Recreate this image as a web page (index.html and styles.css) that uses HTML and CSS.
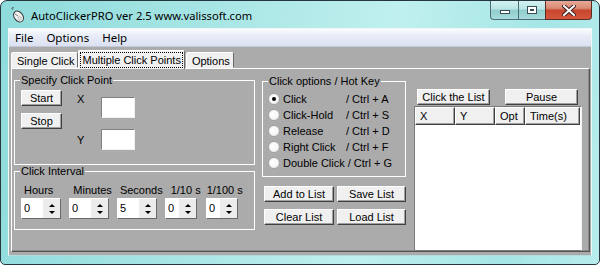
FILE: index.html
```html
<!DOCTYPE html>
<html lang="en">
<head>
  <meta charset="UTF-8"/>
  <title>AutoClickerPRO ver 2.5</title>
  <link rel="stylesheet" href="styles.css">
</head>
<body>

  <div class="window">
    <!-- Title bar -->
    <div class="titlebar">
      <svg class="app-icon" width="15" height="16" viewBox="0 0 15 16">
        <path d="M3 3 C1 1 2 0 4 1" fill="none" stroke="#555" stroke-width="1"/>
        <ellipse cx="8.5" cy="9.5" rx="4.3" ry="6" transform="rotate(-38 8.5 9.5)" fill="#f4f4f4" stroke="#3a3a3a" stroke-width="1"/>
        <path d="M4.5 6.5 L8 9" stroke="#777" stroke-width="1"/>
        <ellipse cx="10" cy="11.5" rx="2.5" ry="3" transform="rotate(-38 10 11.5)" fill="#d8d8d8"/>
      </svg>
      <span class="title">AutoClickerPRO ver 2.5 www.valissoft.com</span>
      <div class="caption-btns">
        <span class="cap cap-min"><i></i></span>
        <span class="cap cap-max"><i></i></span>
        <span class="cap cap-close">
          <svg width="14" height="11" viewBox="0 0 14 11">
            <path d="M2 1 L12 10 M12 1 L2 10" stroke="#3d2020" stroke-width="4" stroke-linecap="square"/>
            <path d="M2 1 L12 10 M12 1 L2 10" stroke="#fff" stroke-width="2" stroke-linecap="square"/>
          </svg>
        </span>
      </div>
    </div>

    <div class="client">
      <div class="menubar">
        <span>File</span>
        <span>Options</span>
        <span>Help</span>
      </div>

      <div class="workarea">
        <div class="tabs">
          <span class="tab">Single Click</span>
          <span class="tab active"><span class="focus">Multiple Click Points</span></span>
          <span class="tab">Options</span>
        </div>

        <div class="panel">
          <!-- Left column -->
          <div class="col-left">
            <div class="group specify">
              <span class="group-title">Specify Click Point</span>
              <div class="specify-body">
                <div class="btn-stack">
                  <button class="btn">Start</button>
                  <button class="btn">Stop</button>
                </div>
                <div class="xy-labels">
                  <span>X</span>
                  <span>Y</span>
                </div>
                <div class="xy-inputs">
                  <span class="textbox"></span>
                  <span class="textbox"></span>
                </div>
              </div>
            </div>

            <div class="group interval">
              <span class="group-title">Click Interval</span>
              <div class="interval-labels">
                <span class="l-hours">Hours</span>
                <span class="l-min">Minutes</span>
                <span class="l-sec">Seconds</span>
                <span class="l-tenth">1/10 s</span>
                <span class="l-hund">1/100 s</span>
              </div>
              <div class="spins">
                <span class="spin"><span class="val">0</span><span class="arrows"><b class="up"></b><b class="down"></b></span></span>
                <span class="spin"><span class="val">0</span><span class="arrows"><b class="up"></b><b class="down"></b></span></span>
                <span class="spin"><span class="val">5</span><span class="arrows"><b class="up"></b><b class="down"></b></span></span>
                <span class="spin small"><span class="val">0</span><span class="arrows"><b class="up"></b><b class="down"></b></span></span>
                <span class="spin small"><span class="val">0</span><span class="arrows"><b class="up"></b><b class="down"></b></span></span>
              </div>
            </div>
          </div>

          <!-- Middle column -->
          <div class="col-mid">
            <div class="group options">
              <span class="group-title">Click options / Hot Key</span>
              <div class="radio-list">
                <div class="radio-row"><span class="radio checked"></span><span class="r-name">Click</span><span>/ Ctrl + A</span></div>
                <div class="radio-row"><span class="radio"></span><span class="r-name">Click-Hold</span><span>/ Ctrl + S</span></div>
                <div class="radio-row"><span class="radio"></span><span class="r-name">Release</span><span>/ Ctrl + D</span></div>
                <div class="radio-row"><span class="radio"></span><span class="r-name">Right Click</span><span>/ Ctrl + F</span></div>
                <div class="radio-row"><span class="radio"></span><span class="r-name long">Double Click</span><span>/ Ctrl + G</span></div>
              </div>
            </div>
            <div class="list-btns">
              <button class="btn">Add to List</button>
              <button class="btn">Save List</button>
              <button class="btn">Clear List</button>
              <button class="btn">Load List</button>
            </div>
          </div>

          <!-- Right column -->
          <div class="col-right">
            <div class="top-btns">
              <button class="btn list-btn">Click the List</button>
              <button class="btn list-btn">Pause</button>
            </div>
            <div class="listview">
              <div class="lv-head">
                <span class="c-x">X</span>
                <span class="c-y">Y</span>
                <span class="c-opt">Opt</span>
                <span class="c-time">Time(s)</span>
              </div>
            </div>
          </div>
        </div>
      </div>
    </div>
  </div>

</body>
</html>
```

FILE: styles.css
```css
* {
  box-sizing: border-box;
}

body {
  margin: 0;
  background: #fff;
  font-family: "Liberation Sans", Arial, sans-serif;
  font-size: 11px;
  color: #000;
}

/* Window frame */
.window {
  width: 600px;
  height: 265px;
  border: 1px solid #26363e;
  border-radius: 7px 7px 5px 5px;
  background: linear-gradient(100deg, #8fdbdb 0%, #a5e4e4 30%, #bff0ee 62%, #a6e6e6 85%, #b8ecec 100%);
  padding: 0 7px 8px;
  display: flex;
  flex-direction: column;
  overflow: hidden;
}

.titlebar {
  height: 29px;
  display: flex;
  align-items: center;
}

.app-icon {
  margin-left: 2px;
  margin-right: 6px;
}

.title {
  font-family: "Noto Sans", "Open Sans", sans-serif;
  font-size: 11.2px;
  color: #000;
  padding-top: 1px;
}

.caption-btns {
  margin-left: auto;
  align-self: flex-start;
  display: flex;
  height: 19px;
}

.cap {
  display: flex;
  align-items: center;
  justify-content: center;
  height: 19px;
  border: 1px solid #4e6a72;
  border-top: none;
  background: linear-gradient(#d4f2f2 0%, #b9e6e6 45%, #92cccc 50%, #a6dcdc 100%);
}

.cap-min {
  width: 28px;
  border-radius: 0 0 0 4px;
  border-right: none;
  padding-top: 4px;
}

.cap-min i {
  width: 10px;
  height: 4px;
  background: #fff;
  border: 1px solid #3a4c55;
}

.cap-max {
  width: 27px;
  border-right: none;
}

.cap-max i {
  width: 10px;
  height: 8px;
  border: 1px solid #3a4c55;
  box-shadow: inset 0 0 0 2px #fff, inset 0 0 0 3px #3a4c55;
  background: #bfe4e4;
}

.cap-close {
  width: 47px;
  border-radius: 0 0 4px 0;
  border-color: #5b2a22;
  background: linear-gradient(#e8a896 0%, #d98a74 40%, #c6462e 52%, #d5573c 100%);
}

/* Client area */
.client {
  flex: 1;
  display: flex;
  flex-direction: column;
  border: 1px solid #eef8f8;
  border-bottom-color: #b5dcdc;
}

.menubar {
  height: 18px;
  display: flex;
  align-items: center;
  padding-left: 6px;
  background: linear-gradient(#fbfcfe 0%, #e9edf7 35%, #dce1f1 100%);
  border-bottom: 1px solid #c2c8da;
  font-family: "Noto Sans", "Open Sans", sans-serif;
  font-size: 11.5px;
}

.menubar span {
  margin-right: 13px;
}

.workarea {
  flex: 1;
  background: #ababab;
  padding: 3px 1px 3px 2px;
  display: flex;
  flex-direction: column;
}

/* Tabs */
.tabs {
  display: flex;
  align-items: flex-end;
  height: 18px;
  position: relative;
  z-index: 1;
}

.tab {
  height: 16px;
  padding: 1px 3px 0 5px;
  background: #f0f0f0;
  border: 1px solid;
  border-color: #fff #696969 transparent #fff;
  border-radius: 2px 2px 0 0;
  line-height: 14px;
}

.tab.active {
  height: 19px;
  margin: 0 1px 0 0;
  padding: 1px 1px 0 1px;
  border-bottom: none;
  margin-bottom: -1px;
}

.tab.active .focus {
  display: block;
  border: 1px dotted #000;
  padding: 0 1px;
  line-height: 14px;
}

.panel {
  flex: 1;
  display: flex;
  border: 1px solid;
  border-color: #fff #555 #555 #fff;
  box-shadow: inset -1px -1px #8a8a8a;
  padding: 0 0 0 2px;
}

/* Group boxes */
.group {
  border: 1px solid #fff;
}

.group-title {
  display: block;
  width: fit-content;
  height: 13px;
  line-height: 13px;
  margin: -7px 0 0 5px;
  padding: 0 1px;
  background: #ababab;
}

.col-left {
  width: 241px;
  display: flex;
  flex-direction: column;
}

.specify {
  margin-top: 11px;
  height: 85px;
}

.specify-body {
  display: flex;
  padding: 3px 0 0 6px;
}

.btn-stack {
  display: flex;
  flex-direction: column;
  gap: 7px;
}

.btn {
  font-family: inherit;
  font-size: 11px;
  height: 16px;
  padding: 0;
  background: #f0f0f0;
  border: 1px solid;
  border-color: #fff #404040 #404040 #fff;
  box-shadow: inset -1px -1px #a0a0a0;
  color: #000;
  line-height: 13px;
}

.btn-stack .btn {
  width: 41px;
}

.xy-labels {
  display: flex;
  flex-direction: column;
  margin-left: 15px;
  width: 24px;
  padding-top: 3px;
  line-height: 13px;
  gap: 28px;
}

.xy-inputs {
  display: flex;
  flex-direction: column;
  gap: 11px;
  padding-top: 7px;
}

.textbox {
  width: 34px;
  height: 21px;
  background: #fff;
  border: 1px solid;
  border-color: #808080 #f0f0f0 #f0f0f0 #808080;
}

.interval {
  margin-top: 6px;
  height: 59px;
}

.interval-labels {
  display: flex;
  padding-top: 6px;
  line-height: 13px;
}

.l-hours { margin-left: 9px; }
.l-min { margin-left: 20px; }
.l-sec { margin-left: 8px; }
.l-tenth { margin-left: 8px; }
.l-hund { margin-left: 6px; }

.spins {
  display: flex;
  gap: 8px;
  padding: 1px 0 0 6px;
}

.spin {
  display: flex;
  width: 40px;
  height: 21px;
  border: 1px solid;
  border-color: #fff #696969 #696969 #fff;
  background: #fff;
}

.spin.small {
  width: 32px;
}

.spin:last-child {
  margin-left: 1px;
}

.spin .val {
  flex: 1;
  padding: 3px 0 0 2px;
  line-height: 13px;
}

.arrows {
  width: 17px;
  background: #ececec;
  display: flex;
  flex-direction: column;
  align-items: center;
  justify-content: center;
  gap: 4px;
}

.arrows b {
  width: 0;
  height: 0;
  border-left: 3px solid transparent;
  border-right: 3px solid transparent;
}

.arrows .up { border-bottom: 3px solid #000; }
.arrows .down { border-top: 3px solid #000; }

/* Middle column */
.col-mid {
  width: 144px;
  margin-left: 7px;
}

.options {
  margin-top: 12px;
  height: 96px;
}

.radio-list {
  padding: 3px 0 0 5px;
}

.radio-row {
  display: flex;
  align-items: center;
  height: 16px;
  line-height: 13px;
  white-space: nowrap;
}

.radio {
  width: 12px;
  height: 12px;
  border-radius: 50%;
  border: 1px solid #a4a4a4;
  background: radial-gradient(circle at 40% 40%, #fff 0%, #f6f6f6 55%, #dcdcdc 100%);
  margin-right: 3px;
  display: flex;
  align-items: center;
  justify-content: center;
}

.radio.checked::after {
  content: "";
  width: 4px;
  height: 4px;
  border-radius: 50%;
  background: #000;
}

.r-name {
  width: 63px;
}

.r-name.long {
  width: auto;
  margin-right: 3px;
}

.list-btns {
  display: grid;
  grid-template-columns: 70px 69px;
  column-gap: 3px;
  row-gap: 7px;
  margin: 9px 0 0 2px;
}

/* Right column */
.col-right {
  width: 168px;
  margin-left: 8px;
  display: flex;
  flex-direction: column;
}

.top-btns {
  display: flex;
  gap: 15px;
  padding: 20px 0 0 3px;
}

.list-btn {
  width: 73px;
}

.listview {
  margin-top: 1px;
  height: 145px;
  background: #fff;
  border: 1px solid;
  border-color: #7a7a7a #f4f4f4 #7a7a7a #7a7a7a;
}

.lv-head {
  display: flex;
  height: 18px;
}

.lv-head span {
  background: #f0f0f0;
  border: 1px solid;
  border-color: #fff #404040 #404040 #fff;
  box-shadow: inset -1px -1px #a0a0a0;
  padding: 2px 0 0 4px;
  line-height: 13px;
}

.c-x { width: 40px; }
.c-y { width: 40px; }
.c-opt { width: 30px; }
.c-time { width: 55px; }
```
